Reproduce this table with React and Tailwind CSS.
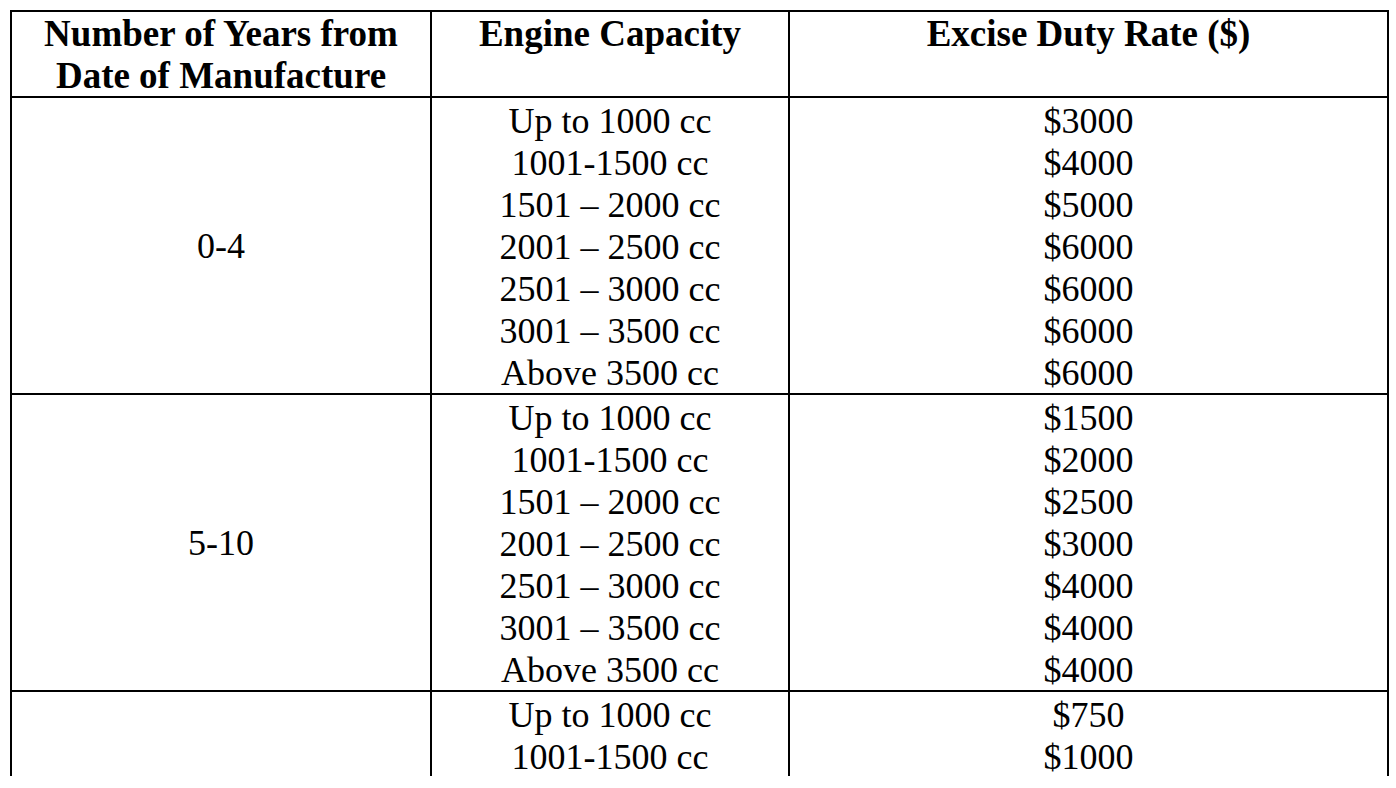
import React from 'react';

const groups = [
    {
        label: '0-4',
        rows: [
            ['Up to 1000 cc', '$3000'],
            ['1001-1500 cc', '$4000'],
            ['1501 – 2000 cc', '$5000'],
            ['2001 – 2500 cc', '$6000'],
            ['2501 – 3000 cc', '$6000'],
            ['3001 – 3500 cc', '$6000'],
            ['Above 3500 cc', '$6000'],
        ],
    },
    {
        label: '5-10',
        rows: [
            ['Up to 1000 cc', '$1500'],
            ['1001-1500 cc', '$2000'],
            ['1501 – 2000 cc', '$2500'],
            ['2001 – 2500 cc', '$3000'],
            ['2501 – 3000 cc', '$4000'],
            ['3001 – 3500 cc', '$4000'],
            ['Above 3500 cc', '$4000'],
        ],
    },
];

const lastRows = [
    ['Up to 1000 cc', '$750'],
    ['1001-1500 cc', '$1000'],
];

const Group = ({ label, rows, last }) => (
    <div className={`flex ${last ? 'flex-1' : 'h-[297px] border-b-2 border-black'}`}>
        <div className="w-[420px] border-r-2 border-black flex items-center justify-center">
            {label}
        </div>
        <div className="w-[358px] border-r-2 border-black pt-[2px] text-center">
            {rows.map(([cc]) => <div key={cc}>{cc}</div>)}
        </div>
        <div className="w-[599px] border-r-2 border-black pt-[2px] text-center">
            {rows.map(([cc, rate]) => <div key={cc}>{rate}</div>)}
        </div>
    </div>
);

export default function App() {
    return (
        <div className="bg-white h-[788px] pt-[10px] pl-[10px]">
            <div
                className="w-[1379px] h-[766px] overflow-hidden border-l-2 border-t-2 border-black flex flex-col text-black text-[36px] leading-[42px]"
                style={{ fontFamily: '"Liberation Serif", "Times New Roman", serif' }}
            >
                {/* header */}
                <div className="flex h-[86px] border-b-2 border-black font-bold text-[37px] text-center">
                    <div className="w-[420px] border-r-2 border-black pt-[1px]">
                        Number of Years from<br />Date of Manufacture
                    </div>
                    <div className="w-[358px] border-r-2 border-black pt-[1px]">Engine Capacity</div>
                    <div className="w-[599px] border-r-2 border-black pt-[1px]">Excise Duty Rate ($)</div>
                </div>
                {groups.map(g => <Group key={g.label} {...g} />)}
                <Group label="" rows={lastRows} last />
            </div>
        </div>
    );
}
